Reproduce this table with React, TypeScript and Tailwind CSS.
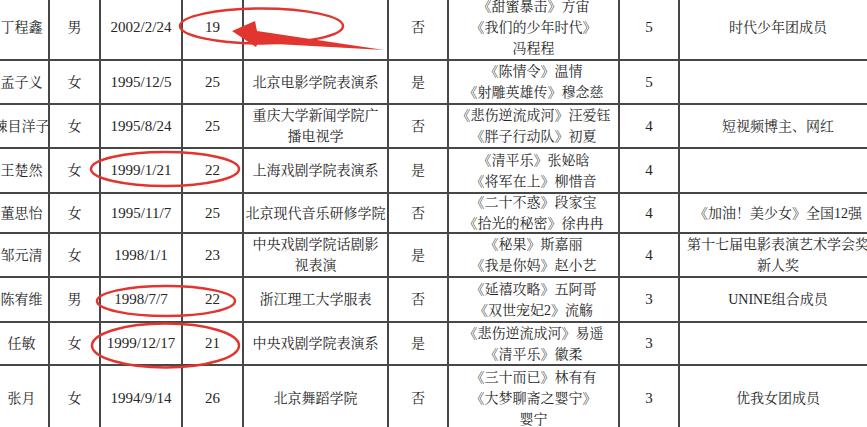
import React from 'react';

interface Row {
  name: string;
  sex: string;
  birth: string;
  age: string;
  school: string[];
  local: string;
  works: string[];
  count: string;
  note: string[];
}

const rows: Row[] = [
  {
    name: '丁程鑫',
    sex: '男',
    birth: '2002/2/24',
    age: '19',
    school: [],
    local: '否',
    works: ['《甜蜜暴击》方宙', '《我们的少年时代》', '冯程程'],
    count: '5',
    note: ['时代少年团成员'],
  },
  {
    name: '孟子义',
    sex: '女',
    birth: '1995/12/5',
    age: '25',
    school: ['北京电影学院表演系'],
    local: '是',
    works: ['《陈情令》温情', '《射雕英雄传》穆念慈'],
    count: '5',
    note: [],
  },
  {
    name: '辣目洋子',
    sex: '女',
    birth: '1995/8/24',
    age: '25',
    school: ['重庆大学新闻学院广', '播电视学'],
    local: '否',
    works: ['《悲伤逆流成河》汪爱钰', '《胖子行动队》初夏'],
    count: '4',
    note: ['短视频博主、网红'],
  },
  {
    name: '王楚然',
    sex: '女',
    birth: '1999/1/21',
    age: '22',
    school: ['上海戏剧学院表演系'],
    local: '是',
    works: ['《清平乐》张妼晗', '《将军在上》柳惜音'],
    count: '4',
    note: [],
  },
  {
    name: '董思怡',
    sex: '女',
    birth: '1995/11/7',
    age: '25',
    school: ['北京现代音乐研修学院'],
    local: '否',
    works: ['《二十不惑》段家宝', '《拾光的秘密》徐冉冉'],
    count: '4',
    note: ['《加油！美少女》全国12强'],
  },
  {
    name: '邹元清',
    sex: '女',
    birth: '1998/1/1',
    age: '23',
    school: ['中央戏剧学院话剧影', '视表演'],
    local: '是',
    works: ['《秘果》斯嘉丽', '《我是你妈》赵小艺'],
    count: '4',
    note: ['第十七届电影表演艺术学会奖', '新人奖'],
  },
  {
    name: '陈宥维',
    sex: '男',
    birth: '1998/7/7',
    age: '22',
    school: ['浙江理工大学服表'],
    local: '否',
    works: ['《延禧攻略》五阿哥', '《双世宠妃2》流觞'],
    count: '3',
    note: ['UNINE组合成员'],
  },
  {
    name: '任敏',
    sex: '女',
    birth: '1999/12/17',
    age: '21',
    school: ['中央戏剧学院表演系'],
    local: '是',
    works: ['《悲伤逆流成河》易遥', '《清平乐》徽柔'],
    count: '3',
    note: [],
  },
  {
    name: '张月',
    sex: '女',
    birth: '1994/9/14',
    age: '26',
    school: ['北京舞蹈学院'],
    local: '否',
    works: ['《三十而已》林有有', '《大梦聊斋之婴宁》', '婴宁'],
    count: '3',
    note: ['优我女团成员'],
  },
];

function Cell({ lines, num }: { lines: string[]; num?: boolean }) {
  return (
    <div
      className={`bg-white flex flex-col items-center justify-center overflow-hidden whitespace-nowrap leading-[21px] ${
        num ? 'text-[15px]' : 'text-[14px]'
      }`}
    >
      {lines.map((l, i) => (
        <span key={i}>{l}</span>
      ))}
    </div>
  );
}

function App() {
  return (
    <div className="relative w-[867px] h-[427px] overflow-hidden bg-white text-[#262626] font-['Liberation_Serif','Noto_Serif_CJK_SC','Noto_Sans_CJK_SC',serif]">
      <div className="grid grid-cols-[53px_49px_80px_59px_143px_58px_169px_58px_196px] grid-rows-[63px_42px_42px_43px_38px_42px_43px_41px_64px] gap-[2px] bg-[#474747] w-max -ml-[5px] -mt-[4px]">
        {rows.map((r) => (
          <React.Fragment key={r.name}>
            <Cell lines={[r.name]} />
            <Cell lines={[r.sex]} />
            <Cell lines={[r.birth]} num />
            <Cell lines={[r.age]} num />
            <Cell lines={r.school} />
            <Cell lines={[r.local]} />
            <Cell lines={r.works} />
            <Cell lines={[r.count]} num />
            <Cell lines={r.note} />
          </React.Fragment>
        ))}
      </div>

      {/* red pen marks drawn over the table */}
      <svg
        className="absolute inset-0 pointer-events-none"
        width="867"
        height="427"
        viewBox="0 0 867 427"
        fill="none"
      >
        <g stroke="#e2352f" strokeWidth="2.5">
          <ellipse cx="261.5" cy="26" rx="81.5" ry="17.5" />
          <ellipse cx="165" cy="169" rx="74" ry="17" />
          <ellipse cx="166" cy="301" rx="69" ry="15" />
          <ellipse cx="165.5" cy="345.5" rx="73.5" ry="22" />
        </g>
        <polygon
          points="232,31 255,21 257,31 384,50 258,43 256,47"
          fill="#e2352f"
        />
      </svg>
    </div>
  );
}

export default App;
